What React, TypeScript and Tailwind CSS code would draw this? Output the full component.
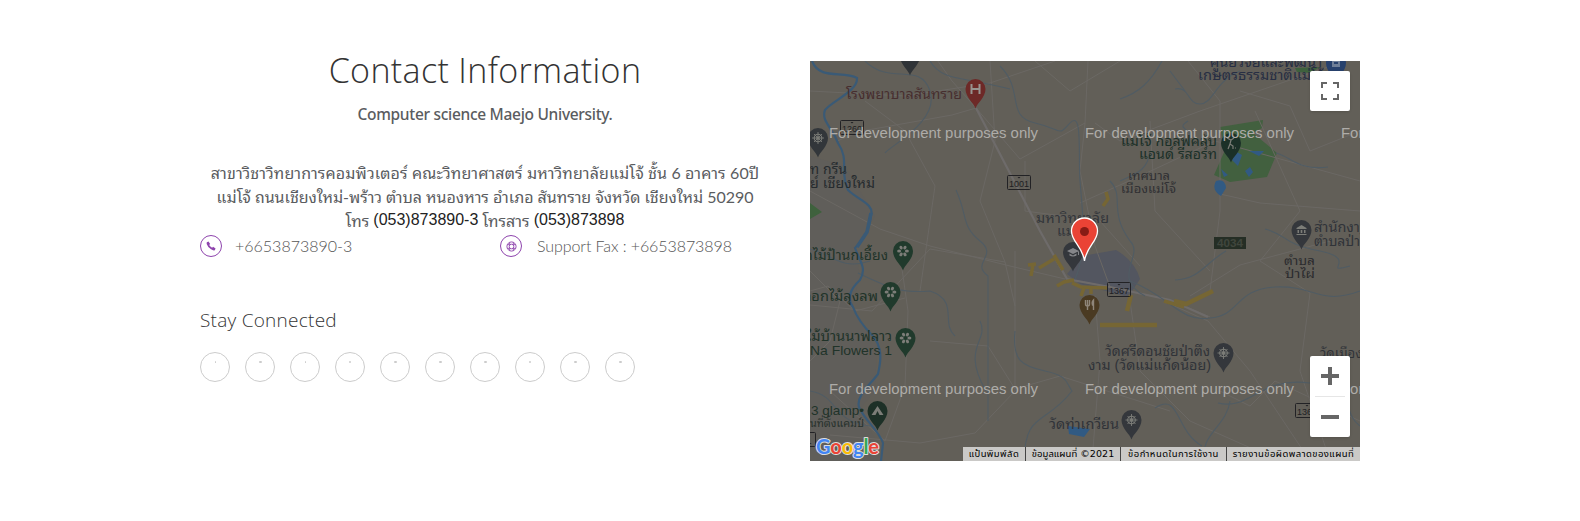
import React from "react";

const thai = "font-['Lato','Noto_Sans_Thai_Looped','Noto_Sans_Thai',sans-serif]";

type PinKind = "none" | "flower" | "wheel" | "tent" | "food" | "cap" | "office" | "hospital" | "golf" | "bus";

function Glyph({ kind }: { kind: PinKind }) {
  const c = "#7c7d78";
  switch (kind) {
    case "flower":
      return (
        <g fill={c}>
          {[0, 60, 120, 180, 240, 300].map((a) => (
            <ellipse key={a} cx="0" cy="-3.9" rx="1.5" ry="2" transform={`rotate(${a + 30})`} />
          ))}
        </g>
      );
    case "wheel":
      return (
        <g stroke={c} fill="none" strokeWidth="1.1">
          <circle r="3.8" />
          <circle r="1.2" />
          <path d="M-6 0H6M0-6V6M-4-4L4 4M-4 4L4-4" strokeWidth="0.9" />
        </g>
      );
    case "tent":
      return <path d="M0-5L6 4H2L0 0L-2 4H-6Z" fill={c} />;
    case "food":
      return <path d="M-4-5V-1Q-4 1-2 1V5M-2-5V1M0-5V-1Q0 1-2 1M4 5V-5Q2-3 3 0H4" stroke="#8f867a" strokeWidth="1.4" fill="none" />;
    case "cap":
      return <path d="M-6-1L0-4L6-1L0 2ZM-3.5 1.500V3.500Q0 5.500 3.500 3.500V1.500L0 3.500ZM5-1V3H6V-1Z" fill="#85868a" />;
    case "office":
      return <path d="M-5-2L0-5L5-2V-1H-5ZM-4 0H-2.500V3H-4ZM-.8 0H.8V3H-.8ZM2.500 0H4V3H2.500ZM-5 4H5V5H-5Z" fill={c} />;
    case "hospital":
      return <path d="M-4-5V5M4-5V5M-4 0H4" stroke="#989490" strokeWidth="2" fill="none" />;
    case "golf":
      return <path d="M-4-5L0-3L3-5M0-3L-1 1L2 3V6M-1 1L-3 6M4 5H5" stroke={c} strokeWidth="1.2" fill="none" />;
    case "bus":
      return <path d="M-4-3H4V4H-4ZM-2-1V1H2V-1Z" fill="#6f7f98" fillRule="evenodd" />;
    default:
      return null;
  }
}

function Pin({ x, y, fill, kind }: { x: number; y: number; fill: string; kind: PinKind }) {
  return (
    <g transform={`translate(${x} ${y})`}>
      <path d="M0 19.500C-1.500 14-10 8.500-10 0A10 10 0 0 1 10 0C10 8.500 1.500 14 0 19.500Z" fill={fill} />
      <Glyph kind={kind} />
    </g>
  );
}

const pins: { x: number; y: number; fill: string; kind: PinKind }[] = [
  { x: 100, y: -5, fill: "#303438", kind: "none" },
  { x: 165.5, y: 28, fill: "#6d2927", kind: "hospital" },
  { x: 8, y: 77, fill: "#32363a", kind: "wheel" },
  { x: 421, y: 82, fill: "#1b3028", kind: "golf" },
  { x: 526, y: 2, fill: "#27416d", kind: "bus" },
  { x: 93, y: 190, fill: "#203a2c", kind: "flower" },
  { x: 80.5, y: 231, fill: "#203a2c", kind: "flower" },
  { x: 95.5, y: 277, fill: "#203a2c", kind: "flower" },
  { x: 263, y: 191, fill: "#34373c", kind: "cap" },
  { x: 279.5, y: 244, fill: "#4a3a22", kind: "food" },
  { x: 491.5, y: 169, fill: "#34373c", kind: "office" },
  { x: 413.5, y: 292, fill: "#34373c", kind: "wheel" },
  { x: 321.5, y: 359, fill: "#34373c", kind: "wheel" },
  { x: 67.5, y: 350, fill: "#1d3027", kind: "tent" },
];

const labels: { t: string; x: number; y: number; w: number; s: number; c: string }[] = [
  { t: "โรงพยาบาลสันทราย", x: 36, y: 38, w: 116, s: 14, c: "#472e2f" },
  { t: "ท กรีน", x: 0, y: 113, w: 37, s: 14, c: "#262b2e" },
  { t: "ย์ เชียงใหม่", x: 0, y: 127, w: 65, s: 14, c: "#262b2e" },
  { t: "ศูนย์วิจัยและพัฒนา", x: 400, y: 6, w: 112, s: 14, c: "#272e43" },
  { t: "เกษตรธรรมชาติแม่โจ้", x: 388, y: 19, w: 126, s: 14, c: "#272e43" },
  { t: "แม่โจ้ กอล์ฟคลับ", x: 311, y: 85, w: 96, s: 14, c: "#1b3028" },
  { t: "แอนด์ รีสอร์ท", x: 329, y: 98, w: 78, s: 14, c: "#1b3028" },
  { t: "เทศบาล", x: 318, y: 119, w: 42, s: 13, c: "#303033" },
  { t: "เมืองแม่โจ้", x: 311, y: 132, w: 55, s: 13, c: "#303033" },
  { t: "มหาวิทยาลัย", x: 226, y: 162, w: 73, s: 14, c: "#33363b" },
  { t: "แม่โจ้", x: 247, y: 175, w: 30, s: 14, c: "#33363b" },
  { t: "กไม้ป้านกเอี้ยง", x: -6, y: 199, w: 84, s: 14, c: "#203329" },
  { t: "ดอกไม้ลุงลพ", x: -8, y: 240, w: 76, s: 14, c: "#203329" },
  { t: "ไม้บ้านนาฟลาว", x: -4, y: 280, w: 86, s: 14, c: "#203329" },
  { t: "Na Flowers 1", x: 0, y: 294, w: 82, s: 13.5, c: "#203329" },
  { t: "3 glamp•", x: 1, y: 354, w: 53, s: 13.5, c: "#203329" },
  { t: "นที่ตั้งแคมป์", x: 0, y: 366, w: 54, s: 11, c: "#27312c" },
  { t: "วัดศรีดอนชัยป่าตึง", x: 295, y: 295, w: 105, s: 14, c: "#303338" },
  { t: "งาม (วัดแม่แก้ดน้อย)", x: 278, y: 309, w: 123, s: 14, c: "#303338" },
  { t: "วัดท่าเกวียน", x: 239, y: 368, w: 70, s: 14, c: "#303338" },
  { t: "วัดเมือง", x: 510, y: 297, w: 42, s: 14, c: "#303338" },
  { t: "สำนักงาน", x: 504, y: 171, w: 55, s: 14, c: "#303338" },
  { t: "ตำบลป่าไผ่", x: 504, y: 185, w: 60, s: 14, c: "#303338" },
  { t: "ตำบล", x: 474, y: 204, w: 31, s: 13, c: "#2b2b2e" },
  { t: "ป่าไผ่", x: 475, y: 217, w: 30, s: 13, c: "#2b2b2e" },
];

const roads = [
  "M27 80L52 70L142 54L166 47L230 170L257 218L300 226L360 239L400 256",
  "M166 47L142 20L125 -4",
  "M166 47L210 98L275 62L278 0",
  "M275 62L270 110L285 185L300 226",
  "M285 62L310 80L390 50L550 -5",
  "M270 142L330 115L405 80L550 120",
  "M255 218L200 205L120 185L70 168L0 130",
  "M195 201L120 188L62 250L0 244",
  "M92 208L98 250L95 325L75 380L20 330",
  "M180 0L185 80L170 140L195 201L205 245",
  "M205 190L205 330L165 372L110 382L20 374",
  "M285 235L290 300L282 400",
  "M320 240L330 310L380 360L470 400",
  "M360 243L398 260L440 310L500 400",
  "M378 0L410 40L410 150L400 230",
  "M445 50L490 150L450 200L500 232L490 310L520 400",
  "M380 235L430 204L520 180",
  "M410 133L450 142L550 150",
  "M340 60L345 150L400 210",
  "M0 30L95 35L180 22L245 0",
  "M55 40L95 70L125 125L110 230",
  "M120 280L178 285L205 328L250 315L360 350",
  "M225 0L260 30L310 0",
  "M215 100L215 150L290 160L330 205",
  "M0 210L30 240L20 280L0 300",
  "M0 230L18 225L45 250L95 237",
  "M410 330L440 345L465 320L550 360",
  "M430 30L480 45L500 90L550 70",
];

const creeks = [
  "M55 0C80 25 110 0 120 30S80 85 75 92",
  "M190 5C215 30 195 55 225 62S247 76 260 62S268 95 270 120S278 190 265 218",
  "M352 0C340 22 328 32 310 38",
  "M365 28C380 25 377 43 390 43S405 20 430 10",
  "M360 10L375 30",
  "M378 60C362 70 390 65 375 85",
  "M146 129C158 155 151 165 170 180S160 202 178 215L178 360",
  "M48 212C85 230 95 232 120 230C150 240 130 262 145 275",
  "M300 120C315 135 298 150 320 180C335 195 300 216 335 235",
  "M205 270C202 300 212 305 235 310S255 320 262 330C235 365 215 350 214 400",
  "M365 219C390 218 395 202 416 190",
  "M320 220C360 235 370 262 400 257C430 255 425 228 465 226S510 245 550 230",
  "M408 342C440 350 450 315 500 322S530 350 550 365",
  "M455 168C480 175 470 182 510 190S510 213 540 205",
  "M395 400C388 375 417 365 420 340",
  "M340 90C338 110 325 113 310 120",
  "M466 92C480 95 488 110 518 106",
  "M0 188C20 192 30 210 60 200",
  "M120 0C132 20 150 15 200 28",
  "M170 260C180 280 150 285 176 330",
  "M0 330C30 335 20 360 60 365",
  "M345 347C370 330 365 370 392 385",
];

const mainRiver =
  "M2 0C10 20 33 9 47 17C48 30 22 40 15 49C11 60 22 66 28 82C40 100 29 109 38 129C48 139 65 143 61 155C59 169 55 177 45 187C50 201 57 207 50 219C39 229 37 239 43 246C48 260 58 270 62 274C73 286 71 300 68 313C59 325 46 335 49 346C55 360 68 368 73 382L71 400";

function Shield({ x, y, w = 24, t }: { x: number; y: number; w?: number; t: string }) {
  return (
    <g>
      <rect x={x + 0.5} y={y + 0.5} width={w - 1} height={14} rx="1" fill="none" stroke="#222225" />
      <path d={`M${x + w / 2 - 1.5} ${y + 2}h3l-1.500 1.500z`} fill="#222225" />
      <text x={x + w / 2} y={y + 11.5} textAnchor="middle" fontSize="9" fill="#202023">{t}</text>
    </g>
  );
}

function MapDrawing() {
  const marks: [number, number][] = [[19, 77], [275, 77], [531, 77], [19, 333], [275, 333], [531, 333]];
  const yellow: string[] = [
    "M293 145L298 138L296 131", "M229 207L244 198",
    "M218 204L226 203M223 204L221 215", "M244 194L253 209", "M247 225L254 221L264 219",
    "M262 222L271 226L298 227", "M274 227L271 235M281 227V233", "M354 240L374 246",
  ];
  return (
    <svg viewBox="0 0 550 400" className="block h-[400px] w-[550px] font-['Liberation_Sans','Noto_Sans_Thai_Looped','Noto_Sans_Thai',sans-serif]">
      <rect width="550" height="400" fill="#625f58" />
      <path d="M0 95L35 105L65 155L45 187L50 215L42 245L67 285L65 330L48 350L70 385V400H0Z" fill="#605e5a" />
      <path d="M272 195L306 189Q325 200 330 218L318 236L270 223L257 213Z" fill="#535660" />
      <path d="M410 66L453 59L452 67L443 72L467 92L457 116L420 121L404 114L415 89Z" fill="#42603f" />
      <path d="M0 142L12 151L0 158ZM485 7L510 6L500 12L487 11Z" fill="#3e613d" />
      <g fill="none" stroke="#6b6864" strokeWidth="1">
        {roads.map((d) => <path key={d} d={d} />)}
      </g>
      <path d="M166 47L230 170L257 218L300 226L360 239L398 256" stroke="#6e6b6a" strokeWidth="2.2" fill="none" />
      <g fill="none" stroke="#505c64" strokeWidth="1.100">
        {creeks.map((d) => <path key={d} d={d} />)}
      </g>
      <path d={mainRiver} stroke="#3a5a76" strokeWidth="2.2" fill="none" />
      <path d="M61 152L57 171L47 186" stroke="#3a5a76" strokeWidth="3.600" fill="none" />
      <g fill="#315a83">
        <path d="M406 120Q415 117 416 127L411 135Q401 129 406 120Z" />
        <path d="M425 90L432 94L428 105L422 99ZM439 90L454 90L449 95ZM411 108L418 114L414 116ZM440 106L443 111L439 116L435 110Z" />
        <path d="M258 365L280 368L274 376L259 373Z" />
      </g>
      <g fill="none" stroke="#766634" strokeWidth="3.500">
        {yellow.map((d) => <path key={d} d={d} />)}
      </g>
      <path d="M290 264H347M321 234L317 250M364 240L376 243L403 230" fill="none" stroke="#766634" strokeWidth="4.500" />
      <Shield x={30} y={59} t="1260" />
      <Shield x={197} y={114} t="1001" />
      <Shield x={297} y={221} t="1367" />
      <Shield x={485} y={342} t="1367" />
      <Shield x={-18} y={371} t="121" />
      <rect x="404" y="176" width="32" height="12" fill="#252e25" />
      <text x="420" y="186" textAnchor="middle" fontSize="10" fontWeight="bold" textLength="26" lengthAdjust="spacingAndGlyphs" fill="#40463d">4034</text>
      {labels.map((l) => (
        <text key={l.t} x={l.x} y={l.y} fontSize={l.s} fill={l.c} textLength={l.w} lengthAdjust="spacingAndGlyphs">{l.t}</text>
      ))}
      {pins.map((p) => <Pin key={`${p.x}-${p.y}`} {...p} />)}
      {marks.map(([x, y]) => (
        <text key={`${x}-${y}`} x={x} y={y} fontSize="14.700" fill="#aeaca8" textLength="209" lengthAdjust="spacingAndGlyphs">For development purposes only</text>
      ))}
      <path d="M274.500 200C272.500 185 261.500 181 261.500 170A13 13 0 0 1 287.500 170C287.500 181 276.500 185 274.500 200Z" fill="#ea4335" stroke="#fff" strokeWidth="1.300" />
      <circle cx="274.500" cy="170.500" r="4.500" fill="#871b15" />
      <text x="6" y="393" fontSize="20" fontWeight="bold" textLength="63" stroke="#dedede" strokeWidth="2" paintOrder="stroke" strokeLinejoin="round" className="font-[Lato,sans-serif]">
        <tspan fill="#4285f4">G</tspan><tspan fill="#ea4335">o</tspan><tspan fill="#fbbc05">o</tspan><tspan fill="#4285f4">g</tspan><tspan fill="#34a853">l</tspan><tspan fill="#ea4335">e</tspan>
      </text>
    </svg>
  );
}

function MapPanel() {
  return (
    <section className="relative h-[400px] w-[550px] shrink-0 overflow-hidden">
      <MapDrawing />
      <button className="absolute top-[10px] right-[10px] flex size-[40px] items-center justify-center rounded-[2px] bg-white shadow-sm">
        <svg viewBox="0 0 18 18" className="size-[18px]" fill="#666">
          <path d="M0 0v6h2V2h4V0H0zm16 0h-4v2h4v4h2V0h-2zm0 16h-4v2h6v-6h-2v4zM2 12H0v6h6v-2H2v-4z" />
        </svg>
      </button>
      <div className="absolute right-[10px] bottom-[24px] flex h-[81px] w-[40px] flex-col items-center rounded-[2px] bg-white shadow-sm">
        <button className="flex h-[40px] w-full items-center justify-center">
          <svg viewBox="0 0 18 18" className="size-[18px]" fill="#666"><path d="M18 7h-7V0H7v7H0v4h7v7h4v-7h7z" /></svg>
        </button>
        <div className="h-px w-[30px] bg-[#e6e6e6]" />
        <button className="flex h-[40px] w-full items-center justify-center">
          <svg viewBox="0 0 18 18" className="size-[18px]" fill="#666"><path d="M0 7h18v4H0z" /></svg>
        </button>
      </div>
      <div className="absolute right-0 bottom-0 flex h-[14px] w-[397px] bg-[#cac9c7] text-[9.500px] leading-[14px] whitespace-nowrap text-black font-['DejaVu_Sans','Noto_Sans_Thai',sans-serif]">
        <span className="w-[62px] text-center tracking-[0.400px]">แป้นพิมพ์ลัด</span>
        <span className="w-[95px] border-l border-[#444] text-center tracking-[0.050px]">ข้อมูลแผนที่ ©2021</span>
        <span className="w-[106px] border-l border-[#444] text-center tracking-[0.500px]">ข้อกำหนดในการใช้งาน</span>
        <span className="flex-1 border-l border-[#444] text-center tracking-[0.450px]">รายงานข้อผิดพลาดของแผนที่</span>
      </div>
    </section>
  );
}

const dots = ["w-[1px]", "w-[3px]", "w-[1px]", "w-[2px]", "w-[3px]", "w-[3px]", "w-[3px]", "w-[2px]", "w-[3px]", "w-[3px]"];

export default function App() {
  return (
    <main className="flex h-[521px] w-[1580px] bg-white pt-[61px] pl-[200px]">
      <section className="mr-[40px] w-[570px] shrink-0">
        <h1 className="-mt-[16px] h-[50px] text-center font-['Open_Sans',sans-serif] text-[34px] leading-[50px] font-light tracking-[0.350px] whitespace-nowrap text-[#333]">Contact Information</h1>
        <p className="mt-[6px] h-[26px] text-center font-['Noto_Sans',sans-serif] text-[15.500px] leading-[26px] font-medium tracking-[-0.300px] whitespace-nowrap text-[#5a5c60]">Computer science Maejo University.</p>
        <div className={`mt-[34px] h-[72px] text-center text-[16px] leading-[24px] whitespace-nowrap text-[#5a5c60] ${thai}`}>
          <p className="h-[24px] tracking-[0.120px]">สาขาวิชาวิทยาการคอมพิวเตอร์ คณะวิทยาศาสตร์ มหาวิทยาลัยแม่โจ้ ชั้น 6 อาคาร 60ปี</p>
          <p className="h-[24px] tracking-[-0.030px]">แม่โจ้ ถนนเชียงใหม่-พร้าว ตำบล หนองหาร อำเภอ สันทราย จังหวัด เชียงใหม่ 50290</p>
          <p className="h-[24px]">โทร <span className="align-[2px] font-['Liberation_Sans',sans-serif] leading-none text-[#222]">(053)873890-3</span> โทรสาร <span className="align-[2px] font-['Liberation_Sans',sans-serif] leading-none text-[#222]">(053)873898</span></p>
        </div>
        <div className="mt-[1px] flex h-[24px] items-center font-[Lato,sans-serif] text-[16px] font-light text-[#555]">
          <div className="flex w-[300px] items-center">
            <span className="flex size-[22px] items-center justify-center rounded-full border border-[#8e44ad]">
              <svg viewBox="0 0 12 12" className="size-[10px]" fill="#8e44ad"><path d="M1 1.500L3 .5L5 3.500L3.800 4.800Q5 7 7.300 8.200L8.500 7L11.500 9L10.500 11Q9 12 6 10Q2 7.500 1 4Q.5 2.500 1 1.500Z" /></svg>
            </span>
            <span className="ml-[13px]">+6653873890-3</span>
          </div>
          <span className="flex size-[22px] items-center justify-center rounded-full border border-[#8e44ad]">
            <svg viewBox="0 0 12 12" className="size-[11px]" fill="none" stroke="#8e44ad"><circle cx="6" cy="6" r="5" /><circle cx="6" cy="6" r="2.500" /><path d="M4 1.500V4H1.500M8 1.500V4h2.500M4 10.500V8H1.500M8 10.500V8h2.500" /></svg>
          </span>
          <span className="ml-[15px] tracking-[-0.080px]">Support Fax : +6653873898</span>
        </div>
        <h2 className="mt-[44px] h-[36px] font-['Open_Sans',sans-serif] text-[19px] leading-[36px] font-light tracking-[0.250px] whitespace-nowrap text-[#333]">Stay Connected</h2>
        <div className="mt-[14px] flex gap-[15px]">
          {dots.map((w, i) => (
            <span key={i} className="flex size-[30px] justify-center rounded-full border border-[#ccc] pt-[8px]">
              <i className={`h-[2px] rounded-full bg-[#ccc] ${w}`} />
            </span>
          ))}
        </div>
      </section>
      <MapPanel />
    </main>
  );
}
